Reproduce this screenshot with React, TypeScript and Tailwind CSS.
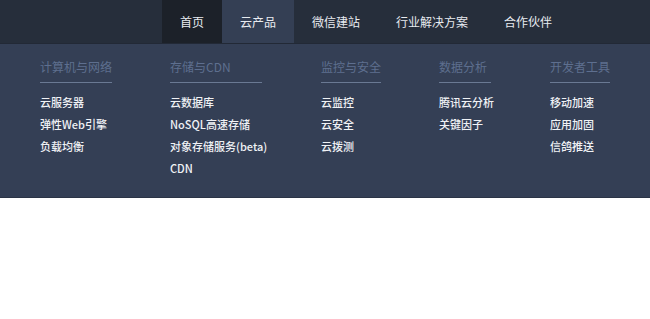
import React from "react";

const nav = ["首页", "云产品", "微信建站", "行业解决方案", "合作伙伴"];

const cols: { title: string; width: string; items: string[] }[] = [
  { title: "计算机与网络", width: "w-[72px]", items: ["云服务器", "弹性Web引擎", "负载均衡"] },
  { title: "存储与CDN", width: "w-[92px]", items: ["云数据库", "NoSQL高速存储", "对象存储服务(beta)", "CDN"] },
  { title: "监控与安全", width: "w-[60px]", items: ["云监控", "云安全", "云拨测"] },
  { title: "数据分析", width: "w-[52px]", items: ["腾讯云分析", "关键因子"] },
  { title: "开发者工具", width: "w-[60px]", items: ["移动加速", "应用加固", "信鸽推送"] },
];

export default function App() {
  return (
    <div
      className="w-[650px] h-[319px] bg-white"
      style={{ fontFamily: '"Noto Sans CJK SC", "Noto Sans", sans-serif' }}
    >
      <div className="h-[44px] bg-[#262e3b] flex pl-[162px] border-b border-[#222936]">
        {nav.map((n, i) => (
          <div
            key={n}
            className={
              "h-full flex items-center px-[18px] text-[12px] text-[#e8ebf0] " +
              (i === 0 ? "bg-[#1c2129]" : i === 1 ? "bg-[#343f54]" : "")
            }
          >
            {n}
          </div>
        ))}
      </div>
      <div className="bg-[#343f55] pl-[40px] pt-[14px] pb-[18px] grid grid-cols-[130px_151px_118px_111px_auto] border-b border-[#2b3446]">
        {cols.map((c) => (
          <div key={c.title} className={c.width}>
            <div className="text-[12px] leading-[18px] text-[#5e6f8f] pb-[6px] border-b border-[#6a7993] whitespace-nowrap">
              {c.title}
            </div>
            <div className="mt-[8px]">
              {c.items.map((it) => (
                <div key={it} className="text-[11px] leading-[22px] text-[#f0f2f5] font-medium whitespace-nowrap">
                  {it}
                </div>
              ))}
            </div>
          </div>
        ))}
      </div>
    </div>
  );
}
